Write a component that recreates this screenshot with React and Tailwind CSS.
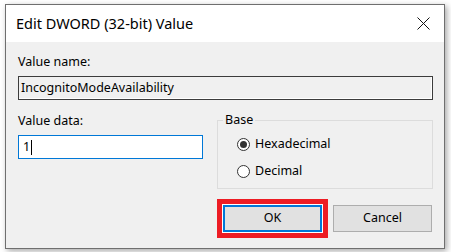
export default function App() {
  const font = { fontFamily: '"Segoe UI", "Noto Sans", "Open Sans", sans-serif' };
  return (
    <div className="w-[451px] h-[252px] bg-white overflow-hidden pt-[4px] pl-[5px]" style={font}>
      <div className="w-[440px] h-[245px] border border-[#6f6f6f] shadow-[2px_2px_6px_rgba(0,0,0,0.35)] flex flex-col">
        <div className="h-[37px] bg-white flex items-center justify-between pl-[10px] pr-[14px]">
          <span className="text-[14.5px] text-black leading-none">Edit DWORD (32-bit) Value</span>
          <svg width="13" height="13" viewBox="0 0 13 13">
            <path d="M0.5 0.5 L12.5 12.5 M12.5 0.5 L0.5 12.5" stroke="#111" strokeWidth="1" fill="none" />
          </svg>
        </div>
        <div className="flex-1 bg-[#f0f0f0] pl-[12px] pr-[11px] pt-[11px] text-[12.5px] text-black">
          <div className="leading-[18px]">Value name:</div>
          <div className="mt-[5px] h-[24px] border border-[#3c3c3c] bg-[#f0f0f0] flex items-center pl-[2px] shadow-[inset_-1px_-1px_0_#ffffff]">
            IncognitoModeAvailability
          </div>
          <div className="flex items-start mt-[12px]">
            <div className="w-[185px]">
              <div className="leading-[18px]">Value data:</div>
              <div className="mt-[5px] h-[24px] border border-[#0078d7] bg-white flex items-center pl-[4px]">
                <span>1</span>
                <span className="w-[1px] h-[15px] bg-black ml-[1px]"></span>
              </div>
            </div>
            <fieldset className="ml-[14px] w-[216px] h-[77px] border border-[#dcdcdc] rounded-none px-[19px]">
              <legend className="-ml-[14px] px-[2px] leading-[16px]">Base</legend>
              <div className="flex items-center h-[17px] mt-[8px]">
                <span className="w-[13px] h-[13px] rounded-full border border-[#333] bg-white flex items-center justify-center">
                  <span className="w-[7px] h-[7px] rounded-full bg-[#333]"></span>
                </span>
                <span className="ml-[5px]">Hexadecimal</span>
              </div>
              <div className="flex items-center h-[17px] mt-[10px]">
                <span className="w-[13px] h-[13px] rounded-full border border-[#333] bg-white"></span>
                <span className="ml-[5px]">Decimal</span>
              </div>
            </fieldset>
          </div>
          <div className="flex mt-[10px] ml-[199px] items-center">
            <div className="w-[111px] h-[39px] bg-[#ed1c24] p-[5px]">
              <div className="w-full h-full bg-white p-[1px]">
                <div className="w-full h-full border-2 border-[#0078d7] bg-[#e1e1e1] flex items-center justify-center">OK</div>
              </div>
            </div>
            <div className="ml-[5px] w-[99px] h-[27px] border border-[#adadad] bg-[#e1e1e1] flex items-center justify-center">Cancel</div>
          </div>
        </div>
      </div>
    </div>
  );
}
